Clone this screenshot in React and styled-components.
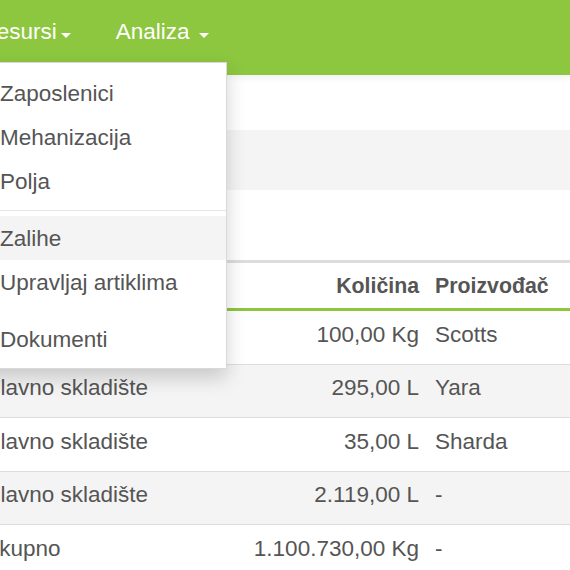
import React from "react";
import styled, { createGlobalStyle } from "styled-components";

const GlobalStyle = createGlobalStyle`
  html, body {
    margin: 0;
    padding: 0;
    background: #ffffff;
    overflow: hidden;
  }
  body {
    font-family: "Liberation Sans", Arial, Helvetica, sans-serif;
    font-size: 22.5px;
    line-height: 30px;
    color: #555555;
  }
`;

const GREEN = "#8dc63f";

const Page = styled.div`
  width: 570px;
  height: 570px;
  overflow: hidden;
  position: relative;
`;

const Navbar = styled.nav`
  height: 75px;
  background: ${GREEN};
  display: flex;
  margin-left: -42px;
  position: relative;
  z-index: 5;
  box-shadow: 0 2px 8px rgba(0, 0, 0, 0.07);
`;

const NavItem = styled.div`
  position: relative;
`;

const NavLink = styled.a`
  display: flex;
  align-items: center;
  padding: 17px 22.5px 28px;
  line-height: 30px;
  color: #ffffff;
  text-decoration: none;
  white-space: nowrap;
`;

const Caret = styled.span`
  display: inline-block;
  width: 0;
  height: 0;
  margin-left: ${(p) => p.$gap}px;
  margin-top: 6px;
  border-top: 5px solid #ffffff;
  border-left: 5px solid transparent;
  border-right: 5px solid transparent;
`;

const Dropdown = styled.div`
  position: absolute;
  top: 62px;
  left: 11px;
  width: 258px;
  background: #ffffff;
  border: 1px solid rgba(0, 0, 0, 0.15);
  box-shadow: 0 9px 18px rgba(0, 0, 0, 0.175);
  padding: 7.5px 0;
  box-sizing: border-box;
`;

const MenuItem = styled.a`
  display: block;
  padding: 8px 30px 6px;
  line-height: 30px;
  color: #555555;
  text-decoration: none;
  white-space: nowrap;
  background: ${(p) => (p.$active ? "#f4f4f4" : "transparent")};
`;

const Divider = styled.div`
  height: 1px;
  margin: 7px 0 5px;
  background: #e5e5e5;
`;

const Spacer = styled.div`
  height: 13px;
`;

const Band = styled.div`
  height: ${(p) => p.$h}px;
  background: ${(p) => (p.$gray ? "#f4f4f4" : "#ffffff")};
`;

const Table = styled.div`
  margin-left: -25px;
  width: 640px;
  border-top: 3px solid #dddddd;
`;

const Row = styled.div`
  display: grid;
  grid-template-columns: 261px 191px 1fr;
  background: ${(p) => (p.$striped ? "#f4f4f4" : "#ffffff")};
  border-bottom: ${(p) => (p.$head ? `3px solid ${GREEN}` : "1px solid #dddddd")};
  font-weight: ${(p) => (p.$head ? 700 : 400)};
  font-size: ${(p) => (p.$head ? "21.3px" : "22.5px")};
`;

const Cell = styled.div`
  padding: ${(p) => (p.$head ? "8px 8px 7px" : "8.5px 8px 14px")};
  line-height: 30px;
  text-align: ${(p) => (p.$right ? "right" : "left")};
  white-space: nowrap;
`;

const rows = [
  ["Glavno skladište", "100,00 Kg", "Scotts"],
  ["Glavno skladište", "295,00 L", "Yara"],
  ["Glavno skladište", "35,00 L", "Sharda"],
  ["Glavno skladište", "2.119,00 L", "-"],
  ["Ukupno", "1.100.730,00 Kg", "-"],
];

export default function App() {
  return (
    <Page>
      <GlobalStyle />
      <Navbar>
        <NavItem>
          <NavLink href="#">
            Resursi<Caret $gap={4} />
          </NavLink>
          <Dropdown>
            <MenuItem href="#">Zaposlenici</MenuItem>
            <MenuItem href="#">Mehanizacija</MenuItem>
            <MenuItem href="#">Polja</MenuItem>
            <Divider />
            <MenuItem href="#" $active>
              Zalihe
            </MenuItem>
            <MenuItem href="#">Upravljaj artiklima</MenuItem>
            <Spacer />
            <MenuItem href="#">Dokumenti</MenuItem>
          </Dropdown>
        </NavItem>
        <NavItem>
          <NavLink href="#">
            Analiza<Caret $gap={9} />
          </NavLink>
        </NavItem>
      </Navbar>
      <Band $h={55} />
      <Band $h={60} $gray />
      <Band $h={70} />
      <Table>
        <Row $head>
          <Cell $head>Skladište</Cell>
          <Cell $head $right>
            Količina
          </Cell>
          <Cell $head>Proizvođač</Cell>
        </Row>
        {rows.map((r, i) => (
          <Row key={i} $striped={i % 2 === 1}>
            <Cell>{r[0]}</Cell>
            <Cell $right>{r[1]}</Cell>
            <Cell>{r[2]}</Cell>
          </Row>
        ))}
      </Table>
    </Page>
  );
}
